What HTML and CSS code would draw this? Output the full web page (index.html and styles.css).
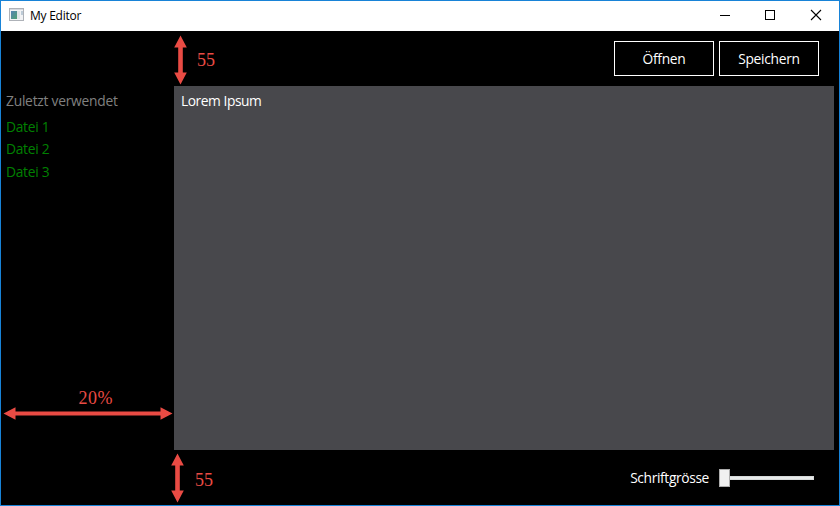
FILE: index.html
```html
<!DOCTYPE html>
<html lang="de">
<head>
<meta charset="utf-8">
<title>My Editor</title>
<link rel="stylesheet" href="styles.css">
</head>
<body>
<div class="window">
  <header class="titlebar">
    <svg class="app-icon" width="16" height="14" viewBox="0 0 16 14">
      <defs><linearGradient id="pane" x1="0" y1="0" x2="1" y2="1"><stop offset="0" stop-color="#5582b4"/><stop offset="1" stop-color="#4fa173"/></linearGradient></defs>
      <rect x=".5" y=".5" width="14" height="12" fill="#f2f3f5" stroke="#aeb2b8"/>
      <path d="M1 1.5h13" stroke="#d5d9df"/>
      <rect x="2" y="3" width="6" height="8" fill="url(#pane)"/>
      <rect x="8" y="3" width="3" height="8" fill="#dfe4e7"/>
      <rect x="12" y="3" width="2" height="4" fill="#bdcbd7"/>
    </svg>
    <span class="title">My Editor</span>
    <svg class="controls" width="138" height="30" viewBox="0 0 138 30" fill="none" stroke="#000">
      <path d="M19 14.5h10"/>
      <rect x="64.500" y="9.500" width="9" height="9"/>
      <path d="M110 9l10 10M120 9l-10 10" stroke-width="1.100"/>
    </svg>
  </header>
  <div class="toolbar">
    <button class="btn">Öffnen</button>
    <button class="btn">Speichern</button>
  </div>
  <main class="content">
    <aside class="sidebar">
      <h2 class="heading">Zuletzt verwendet</h2>
      <ul class="files"><li>Datei 1</li><li>Datei 2</li><li>Datei 3</li></ul>
    </aside>
    <section class="editor">Lorem Ipsum</section>
  </main>
  <footer class="footer">
    <span class="label">Schriftgrösse</span>
    <div class="slider"><div class="thumb"></div><div class="track"></div></div>
  </footer>
  <svg class="measures" width="840" height="506" viewBox="0 0 840 506">
    <path d="M180.500 35.500l6.300 12h-4v25h4l-6.300 12-6.300-12h4v-25h-4z"/>
    <path d="M177.500 453.500l6.300 12h-4v25h4l-6.300 12-6.300-12h4v-25h-4z"/>
    <path d="M3.500 413.500l12-6.300v4.300h145v-4.300l12 6.300-12 6.300v-4.300h-145v4.300z"/>
    <text x="197" y="66">55</text>
    <text x="195" y="486">55</text>
    <text x="78.500" y="404" textLength="34">20%</text>
  </svg>
</div>
</body>
</html>
```
FILE: styles.css
```css
* { box-sizing: border-box; }
body { margin: 0; overflow: hidden; font-family: "Open Sans", "Noto Sans", sans-serif; font-size: 13.8px; letter-spacing: -0.28px; color: #fff; }
.window { position: relative; width: 840px; height: 506px; display: flex; flex-direction: column; background: #000; border: 1px solid #1883d7; }
.titlebar { height: 30px; flex: none; display: flex; align-items: center; background: #fff; color: #000; padding-left: 8px; }
.app-icon { margin-bottom: 2px; }
.title { margin-left: 5px; font-size: 12px; line-height: 30px; letter-spacing: -0.25px; }
.controls { margin-left: auto; }
.toolbar { height: 55px; flex: none; display: flex; justify-content: flex-end; gap: 5px; padding: 10px 20px 10px 0; }
.btn { width: 100px; height: 35px; padding: 1px 0 0; border: 1px solid #fff; background: #000; color: #fff; font: inherit; letter-spacing: inherit; line-height: 32px; }
.content { flex: 1; min-height: 0; display: flex; }
.sidebar { width: 173px; padding: 5px; }
.heading { margin: 0; font: inherit; line-height: 20px; letter-spacing: -0.24px; color: #808080; }
.files { margin: 5px 0 0; padding: 0; list-style: none; color: #008000; }
.files li { height: 22.4px; line-height: 22px; }
.editor { width: 660px; padding: 5px 7px; background: #48484c; line-height: 20px; letter-spacing: -0.45px; }
.footer { height: 55px; flex: none; display: flex; align-items: center; justify-content: flex-end; padding-right: 25px; gap: 10px; }
.label { letter-spacing: -0.37px; }
.slider { width: 95px; display: flex; align-items: center; }
.thumb { width: 11px; height: 18px; border: 1px solid #acacac; background: #f0f0f0; }
.track { flex: 1; height: 4px; background: #e7eaea; border: 1px solid #d6d9d9; border-left: 0; }
.measures { position: absolute; left: -1px; top: -1px; pointer-events: none; fill: #e94b44; font-family: "Liberation Serif", serif; font-size: 18px; letter-spacing: 0; }
```
